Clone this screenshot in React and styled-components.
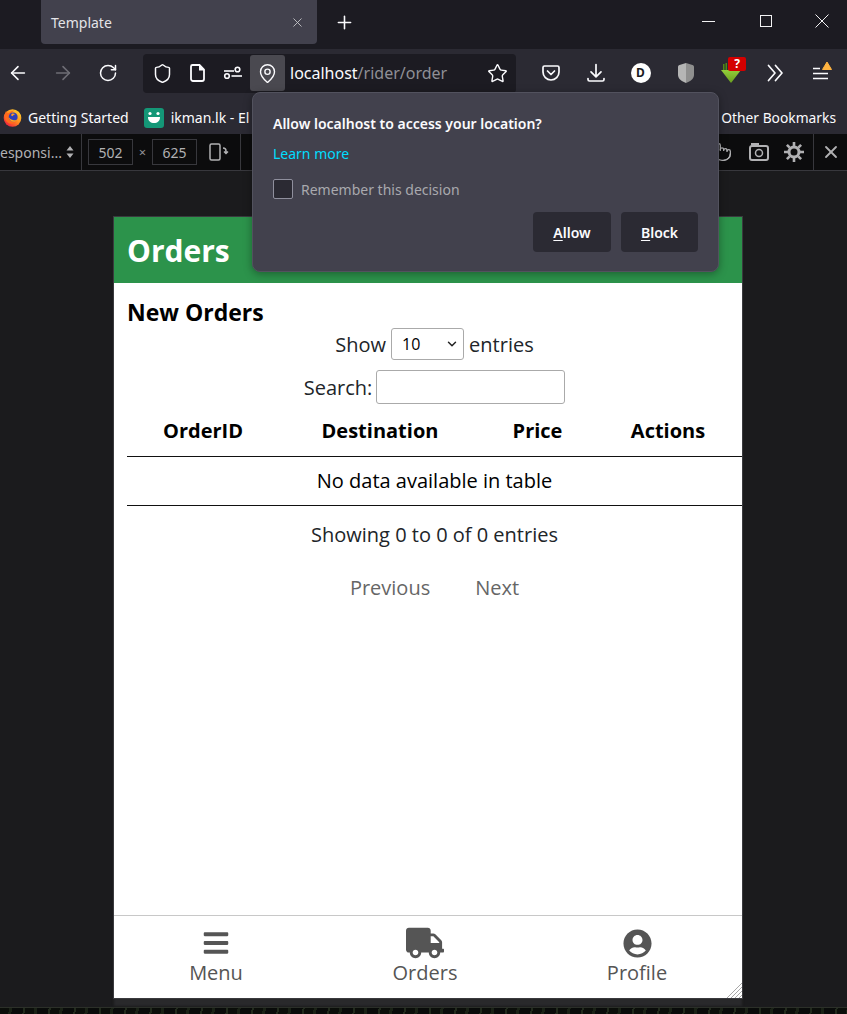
import React from "react";
import styled, { createGlobalStyle } from "styled-components";
import { FaBars, FaTruck, FaUserCircle } from "react-icons/fa";
import { ArrowLeft, ArrowRight, RotateCw, Shield, MapPin, Star, X, Plus, Pointer, ChevronDown } from "lucide-react";

const GlobalStyle = createGlobalStyle`
  html, body { margin: 0; padding: 0; background: #1b1b1d; }
  * { box-sizing: border-box; }
`;

const uiFont = `"Noto Sans", "Open Sans", sans-serif`;
const pageFont = `"Open Sans", "Noto Sans", sans-serif`;

const Browser = styled.div`
  position: relative;
  width: 847px;
  height: 1014px;
  overflow: hidden;
  display: flex;
  flex-direction: column;
  font-family: ${uiFont};
  background: #1b1b1d;
`;

const TabStrip = styled.div`
  height: 49px;
  background: #1c1b22;
  display: flex;
  align-items: flex-start;
  padding-left: 41px;
  flex: none;
`;

const Tab = styled.div`
  width: 276px;
  height: 44px;
  background: #42414d;
  border-radius: 0 0 4px 4px;
  display: flex;
  align-items: center;
  justify-content: space-between;
  padding: 0 12px 0 10px;
  color: #e4e4e8;
  font-size: 14px;
`;

const NewTab = styled.div`
  width: 54px;
  height: 44px;
  display: flex;
  align-items: center;
  justify-content: center;
  color: #fbfbfe;
`;

const WindowControls = styled.div`
  margin-left: auto;
  display: flex;
  align-items: center;
  height: 42px;
  color: #f2f2f4;
`;

const WindowButton = styled.div`
  width: ${(p) => p.$w}px;
  display: flex;
  justify-content: center;
`;

const Toolbar = styled.div`
  height: 52px;
  background: #2b2a33;
  display: flex;
  align-items: center;
  padding: 0 4px 4px 0;
  flex: none;
`;

const ToolIcon = styled.div`
  position: relative;
  width: 45px;
  height: 36px;
  flex: none;
  display: flex;
  align-items: center;
  justify-content: center;
  color: ${(p) => (p.$dim ? "#6f6e76" : "#fbfbfe")};
`;

const NavGroup = styled.div`
  display: flex;
  margin-left: -5px;
`;

const UrlBar = styled.div`
  width: 373px;
  height: 39px;
  margin: 0 12px 0 13px;
  background: #1c1b22;
  border-radius: 4px;
  display: flex;
  align-items: center;
  padding-left: 1px;
  color: #fbfbfe;
`;

const UrlIcon = styled.div`
  width: ${(p) => p.$w || 35}px;
  height: 36px;
  flex: none;
  display: flex;
  align-items: center;
  justify-content: center;
  border-radius: 3px;
  background: ${(p) => (p.$active ? "#4a4950" : "transparent")};
`;

const UrlText = styled.div`
  margin-left: 5px;
  font-size: 16px;
  flex: 1;
  color: #fbfbfe;
  white-space: nowrap;
  span { color: #8f8f96; }
`;

const Bookmarks = styled.div`
  height: 33px;
  background: #2b2a33;
  display: flex;
  align-items: center;
  padding: 0 11px 0 3px;
  color: #fbfbfe;
  font-size: 14px;
  flex: none;
`;

const Bookmark = styled.div`
  display: flex;
  align-items: center;
  gap: ${(p) => p.$gap || 6}px;
  margin-right: 15px;
  white-space: nowrap;
`;

const OtherBookmarks = styled.div`
  margin-left: auto;
  font-size: 13.8px;
  white-space: nowrap;
`;

const DevBar = styled.div`
  height: 37px;
  background: #0c0c0d;
  border-bottom: 1px solid #38383d;
  display: flex;
  align-items: center;
  color: #b1b1b3;
  font-size: 14px;
  flex: none;
`;

const DeviceName = styled.div`
  width: 82px;
  height: 100%;
  margin-right: 6px;
  display: flex;
  align-items: center;
  border-right: 1px solid #38383d;
  white-space: nowrap;
  overflow: hidden;
  svg { margin-left: 4px; flex: none; }
`;

const SizeInput = styled.div`
  width: 45px;
  height: 26px;
  padding-top: 1px;
  border: 1px solid #38383d;
  display: flex;
  align-items: center;
  justify-content: center;
  font-size: 14px;
  color: #b1b1b3;
`;

const Times = styled.span`
  width: 19px;
  text-align: center;
  font-size: 13px;
  color: #939395;
`;

const DevIcon = styled.div`
  width: ${(p) => p.$w || 35}px;
  height: 100%;
  display: flex;
  align-items: center;
  justify-content: center;
  flex: none;
  border-left: ${(p) => (p.$sep ? "1px solid #38383d" : "none")};
  border-right: ${(p) => (p.$sepRight ? "1px solid #38383d" : "none")};
  color: #b1b1b3;
`;

const DevRight = styled.div`
  margin-left: auto;
  height: 100%;
  display: flex;
  align-items: center;
`;

const Viewport = styled.div`
  flex: 1;
  padding: 46px 0 0 114px;
  background: #1b1b1d;
`;

const WallpaperStrip = styled.div`
  height: 7px;
  flex: none;
  border-top: 1px solid #2c3029;
  background: repeating-linear-gradient(100deg, #0b0e0a 0 9px, #1a2216 9px 12px, #090b0a 12px 23px, #222b1d 23px 25px);
`;

const Page = styled.div`
  position: relative;
  width: 628px;
  height: 781px;
  background: #fff;
  display: flex;
  flex-direction: column;
  box-shadow: 0 0 0 1px #3a3a3e, 0 8px 2px 0 #29292b;
  font-family: ${pageFont};
  color: #212529;
`;

const PageHeader = styled.header`
  height: 66px;
  background: #2c934b;
  color: #fff;
  display: flex;
  align-items: center;
  padding-left: 13px;
  flex: none;
  h1 { margin: 0; font-size: 30px; font-weight: 700; }
`;

const Content = styled.main`
  flex: 1;
  padding: 13px 0 0 13px;
  h2 { margin: 0; font-size: 23px; line-height: 32px; font-weight: 700; color: #000; }
`;

const FilterRow = styled.div`
  display: flex;
  justify-content: center;
  align-items: center;
  gap: ${(p) => p.$gap}px;
  font-size: 20px;
  height: ${(p) => p.$h}px;
  margin-top: ${(p) => p.$top || 0}px;
`;

const SelectWrap = styled.div`
  position: relative;
  width: 73px;
  height: 32px;
  svg { position: absolute; right: 5px; top: 9px; pointer-events: none; color: #222; }
`;

const LengthSelect = styled.select`
  appearance: none;
  width: 100%;
  height: 100%;
  font-family: ${pageFont};
  font-size: 16px;
  padding-left: 10px;
  background: #fff;
  border: 1px solid #aaa;
  border-radius: 3px;
  color: #000;
`;

const SearchInput = styled.input`
  width: 189px;
  height: 34px;
  border: 1px solid #aaa;
  border-radius: 3px;
  background: #fff;
`;

const OrdersTable = styled.table`
  width: 615px;
  table-layout: fixed;
  border-collapse: collapse;
  font-size: 20px;
  color: #000;
  margin-top: 1px;
  th {
    height: 51px;
    font-weight: 700;
    text-align: center;
    padding: 0;
    border-bottom: 1px solid #111;
  }
  td {
    height: 49px;
    text-align: center;
    padding: 0;
    border-bottom: 1px solid #111;
  }
`;

const TableInfo = styled.div`
  text-align: center;
  font-size: 20px;
  margin-top: 15px;
  line-height: 27px;
`;

const Pager = styled.div`
  display: flex;
  justify-content: center;
  gap: 45px;
  margin-top: 26px;
  font-size: 20px;
  line-height: 27px;
  color: #666;
`;

const BottomNav = styled.nav`
  height: 83px;
  border-top: 1px solid #c8c8c8;
  display: grid;
  grid-template-columns: 204px 214px 210px;
  flex: none;
`;

const NavItem = styled.div`
  display: flex;
  flex-direction: column;
  align-items: center;
  padding-top: 12px;
  color: #555;
  font-size: 20px;
  line-height: 27px;
  span { margin-top: 1px; }
`;

const NavIconBox = styled.div`
  height: 30px;
  display: flex;
  align-items: center;
  justify-content: center;
`;

const ResizeGrip = styled.svg`
  position: absolute;
  right: 0;
  bottom: 0;
`;

const Doorhanger = styled.div`
  position: absolute;
  left: 252px;
  top: 92px;
  width: 467px;
  height: 180px;
  background: #42414d;
  border: 1px solid #52525e;
  border-radius: 8px;
  padding: 21px 20px 0;
  color: #fbfbfe;
  font-size: 14px;
  box-shadow: 0 2px 8px rgba(0, 0, 0, 0.35);
`;

const DoorTitle = styled.div`
  font-weight: 600;
  line-height: 20px;
`;

const LearnMore = styled.div`
  margin-top: 10px;
  line-height: 20px;
  color: #00ddff;
`;

const RememberRow = styled.div`
  display: flex;
  align-items: center;
  gap: 8px;
  margin-top: 15px;
  color: #a9a9ae;
`;

const CheckBox = styled.div`
  width: 20px;
  height: 20px;
  background: #2b2a33;
  border: 1px solid #8f8f9d;
  border-radius: 2px;
`;

const DoorActions = styled.div`
  display: flex;
  justify-content: flex-end;
  gap: 10px;
  margin-top: 13px;
`;

const DoorButton = styled.div`
  width: ${(p) => p.$w}px;
  height: 40px;
  background: #2b2a33;
  border-radius: 4px;
  display: flex;
  align-items: center;
  justify-content: center;
  font-weight: 600;
  u { text-decoration-thickness: 1px; text-underline-offset: 2px; }
`;

const Badge = styled.div`
  position: absolute;
  right: 7px;
  top: 2px;
  width: 18px;
  height: 14px;
  background: #d40000;
  border-radius: 2px;
  color: #fff;
  font-size: 12px;
  font-weight: 700;
  line-height: 14px;
  text-align: center;
`;

const DBadge = styled.div`
  width: 20px;
  height: 20px;
  border-radius: 50%;
  background: #fff;
  color: #1c1b22;
  font-size: 12px;
  font-weight: 700;
  line-height: 20px;
  text-align: center;
`;

const FirefoxLogo = () => (
  <svg width="19" height="19" viewBox="0 0 20 20">
    <defs>
      <linearGradient id="fx" x1="0.9" y1="0.1" x2="0.2" y2="0.95">
        <stop offset="0" stopColor="#ffd22e" />
        <stop offset="0.5" stopColor="#ff8a1f" />
        <stop offset="1" stopColor="#f0203f" />
      </linearGradient>
    </defs>
    <circle cx="10" cy="10.5" r="9.3" fill="url(#fx)" />
    <path d="M3 3.500c1 1.500 1.500 1.800 3 2 2-2 4-3 6-3C9.500 4 9 5 9 6c3-.5 6 1.500 6 5 0 3.500-3 5.500-6 5.500-4 0-7-3-7-7 0-2 .3-4 1-6z" fill="#ff6a1c" />
    <circle cx="10.700" cy="9.500" r="4.700" fill="#2f3fb8" />
    <path d="M6 9.500c.3 3 2.500 5 5 5 2.300 0 4-1.400 4.600-3.300-1 1.200-2.600 1.800-4.300 1.600C9 12.500 7 11.500 6 9.500z" fill="#ffa41f" />
    <path d="M9 6c1-.3 3-.3 4 .5-1.500.2-2.500 1-2.800 2.300L8.500 8z" fill="#ff9a1f" />
  </svg>
);

const IkmanLogo = () => (
  <svg width="20" height="20" viewBox="0 0 20 20">
    <rect width="20" height="20" rx="3" fill="#149777" />
    <circle cx="6" cy="5.500" r="1.600" fill="#fff" />
    <circle cx="14" cy="5.500" r="1.600" fill="#fff" />
    <path d="M4 9h12c0 4-2.600 6-6 6s-6-2-6-6z" fill="#fff" />
  </svg>
);

const PageIcon = () => (
  <svg width="18" height="20" viewBox="0 0 18 20" fill="none" stroke="#fbfbfe" strokeWidth="1.800">
    <path d="M3.500 2h7l4.500 4.500V16a2 2 0 0 1-2 2H4a2 2 0 0 1-2-2V3.500A1.500 1.500 0 0 1 3.500 2z" />
    <path d="M10 2l5.500 5.500H10z" fill="#fbfbfe" stroke="none" />
  </svg>
);

const PermissionsIcon = () => (
  <svg width="20" height="16" viewBox="0 0 20 16" fill="none" stroke="#fbfbfe" strokeWidth="1.600">
    <path d="M1 6h10" />
    <circle cx="14.500" cy="4.500" r="2.300" />
    <circle cx="4" cy="11" r="2.300" />
    <path d="M8.500 11H19" />
  </svg>
);

const PocketIcon = () => (
  <svg width="20" height="20" viewBox="0 0 20 20" fill="none" stroke="#fbfbfe" strokeWidth="1.700">
    <path d="M3.500 3h13A1.500 1.500 0 0 1 18 4.500V9a8 8 0 0 1-16 0V4.500A1.500 1.500 0 0 1 3.500 3z" />
    <path d="M6.500 8l3.500 3.500L13.500 8" strokeLinecap="round" strokeLinejoin="round" />
  </svg>
);

const TrayDownload = () => (
  <svg width="20" height="20" viewBox="0 0 20 20" fill="none" stroke="#fbfbfe" strokeWidth="1.700" strokeLinecap="round" strokeLinejoin="round">
    <path d="M10 1.500v12M5 8.800l5 5 5-5" />
    <path d="M2 15.500v1a1.500 1.500 0 0 0 1.500 1.500h13a1.500 1.500 0 0 0 1.500-1.500v-1" />
  </svg>
);

const GreyShield = () => (
  <svg width="16" height="20" viewBox="0 0 16 20">
    <path d="M8 0L1.500 2C.6 2.300 0 3 0 4v8c0 3.500 3.500 6.500 8 8z" fill="#b5b5b5" />
    <path d="M8 0l6.500 2c.9.3 1.500 1 1.500 2v8c0 3.500-3.500 6.500-8 8z" fill="#8f8f8f" />
  </svg>
);

const GreenArrow = () => (
  <svg width="22" height="20" viewBox="0 0 22 20">
    <defs>
      <linearGradient id="ga" x1="0" y1="0" x2="0" y2="1">
        <stop offset="0" stopColor="#93cf3a" />
        <stop offset="1" stopColor="#6a9f20" />
      </linearGradient>
    </defs>
    <path d="M3 1h1.500v6H3zM5.500 0H7v7H5.500zM8 0h1.500v7H8z" fill="#4f8a14" />
    <path d="M1 7h20L11 20z" fill="url(#ga)" />
  </svg>
);

const DoubleChevron = () => (
  <svg width="17" height="18" viewBox="0 0 17 18" fill="none" stroke="#fbfbfe" strokeWidth="1.700" strokeLinecap="round" strokeLinejoin="round">
    <path d="M1.500 1.500L8 9l-6.500 7.500M8.500 1.500L15 9l-6.500 7.500" />
  </svg>
);

const MenuAlert = () => (
  <svg width="24" height="24" viewBox="0 0 24 24">
    <path d="M4 7.500h7M4 12.500h15M4 17.500h15" stroke="#fbfbfe" strokeWidth="1.700" />
    <path d="M18 1l4.500 7.500h-9z" fill="#ffb340" stroke="#ffb340" strokeWidth="1" strokeLinejoin="round" />
  </svg>
);

const RotateIcon = () => (
  <svg width="20" height="18" viewBox="0 0 20 18" fill="none" stroke="#b1b1b3" strokeWidth="1.500">
    <rect x="1" y="1" width="10" height="16" rx="1.500" />
    <path d="M14 5c2 0 3 1 3 3v2M15 8.500l2 2 2-2" />
  </svg>
);

const UpDownArrows = () => (
  <svg width="8" height="12" viewBox="0 0 8 12" fill="#b1b1b3">
    <path d="M4 0l3.500 4.500h-7zM4 12L.5 7.500h7z" />
  </svg>
);

const CameraIcon = () => (
  <svg width="22" height="20" viewBox="0 0 22 20" fill="none" stroke="#b1b1b3" strokeWidth="2">
    <rect x="2" y="4" width="18" height="14" rx="2" />
    <circle cx="11" cy="11" r="3.500" strokeWidth="1.500" />
    <path d="M4 3.500V2h6v1.500" />
  </svg>
);

const GearIcon = () => (
  <svg width="22" height="22" viewBox="0 0 22 22" fill="none" stroke="#b1b1b3">
    <circle cx="11" cy="11" r="5" strokeWidth="3" />
    <path d="M11 1v4M11 17v4M1 11h4M17 11h4M3.900 3.900l2.800 2.800M15.300 15.300l2.800 2.800M3.900 18.100l2.800-2.800M15.300 6.700l2.800-2.800" strokeWidth="2.600" />
  </svg>
);

const MinimizeGlyph = () => (
  <svg width="13" height="3" viewBox="0 0 13 3" stroke="currentColor" strokeWidth="1">
    <path d="M0 1.500h13" />
  </svg>
);

const MaximizeGlyph = () => (
  <svg width="12" height="12" viewBox="0 0 12 12" fill="none" stroke="currentColor" strokeWidth="1">
    <rect x="0.500" y="0.500" width="11" height="11" />
  </svg>
);

const CloseGlyph = () => (
  <svg width="14" height="14" viewBox="0 0 14 14" stroke="currentColor" strokeWidth="1">
    <path d="M.5.500l13 13M13.500.500l-13 13" />
  </svg>
);

const Grip = () => (
  <ResizeGrip width="16" height="16" viewBox="0 0 16 16" stroke="#a8a8a8" strokeWidth="1">
    <path d="M16 1L1 16M16 5L5 16M16 9l-7 7M16 13l-3 3" />
  </ResizeGrip>
);

export default function App() {
  return (
    <Browser>
      <GlobalStyle />
      <TabStrip>
        <Tab>
          Template
          <X size={15} strokeWidth={1.4} color="#c8c8cc" />
        </Tab>
        <NewTab>
          <Plus size={21} strokeWidth={1.8} />
        </NewTab>
        <WindowControls>
          <WindowButton $w={54}><MinimizeGlyph /></WindowButton>
          <WindowButton $w={62}><MaximizeGlyph /></WindowButton>
          <WindowButton $w={50}><CloseGlyph /></WindowButton>
        </WindowControls>
      </TabStrip>

      <Toolbar>
        <NavGroup>
          <ToolIcon><ArrowLeft size={22} strokeWidth={1.7} /></ToolIcon>
          <ToolIcon $dim><ArrowRight size={22} strokeWidth={1.7} /></ToolIcon>
          <ToolIcon><RotateCw size={20} strokeWidth={1.8} /></ToolIcon>
        </NavGroup>
        <UrlBar>
          <UrlIcon $w={36}><Shield size={21} strokeWidth={1.7} /></UrlIcon>
          <UrlIcon><PageIcon /></UrlIcon>
          <UrlIcon><PermissionsIcon /></UrlIcon>
          <UrlIcon $active><MapPin size={21} strokeWidth={1.6} /></UrlIcon>
          <UrlText>localhost<span>/rider/order</span></UrlText>
          <UrlIcon $w={38}><Star size={21} strokeWidth={1.6} /></UrlIcon>
        </UrlBar>
        <ToolIcon><PocketIcon /></ToolIcon>
        <ToolIcon><TrayDownload /></ToolIcon>
        <ToolIcon><DBadge>D</DBadge></ToolIcon>
        <ToolIcon><GreyShield /></ToolIcon>
        <ToolIcon>
          <GreenArrow />
          <Badge>?</Badge>
        </ToolIcon>
        <ToolIcon><DoubleChevron /></ToolIcon>
        <ToolIcon><MenuAlert /></ToolIcon>
      </Toolbar>

      <Bookmarks>
        <Bookmark><FirefoxLogo />Getting Started</Bookmark>
        <Bookmark $gap={7}><IkmanLogo />ikman.lk - El</Bookmark>
        <OtherBookmarks>Other Bookmarks</OtherBookmarks>
      </Bookmarks>

      <DevBar>
        <DeviceName>esponsi...<UpDownArrows /></DeviceName>
        <SizeInput>502</SizeInput>
        <Times>×</Times>
        <SizeInput>625</SizeInput>
        <DevIcon $w={44} $sepRight><RotateIcon /></DevIcon>
        <DevRight>
          <DevIcon $w={42}><Pointer size={20} strokeWidth={1.5} /></DevIcon>
          <DevIcon $w={32}><CameraIcon /></DevIcon>
          <DevIcon $w={38}><GearIcon /></DevIcon>
          <DevIcon $w={34} $sep><X size={20} strokeWidth={2.2} /></DevIcon>
        </DevRight>
      </DevBar>

      <Viewport>
        <Page>
          <PageHeader><h1>Orders</h1></PageHeader>
          <Content>
            <h2>New Orders</h2>
            <FilterRow $h={32} $gap={5}>
              Show
              <SelectWrap>
                <LengthSelect defaultValue="10">
                  <option>10</option>
                  <option>25</option>
                  <option>50</option>
                </LengthSelect>
                <ChevronDown size={14} strokeWidth={2.5} />
              </SelectWrap>
              entries
            </FilterRow>
            <FilterRow $h={34} $top={10} $gap={4}>
              Search:
              <SearchInput />
            </FilterRow>
            <OrdersTable>
              <colgroup>
                <col width="152" />
                <col width="202" />
                <col width="113" />
                <col width="148" />
              </colgroup>
              <thead>
                <tr>
                  <th>OrderID</th>
                  <th>Destination</th>
                  <th>Price</th>
                  <th>Actions</th>
                </tr>
              </thead>
              <tbody>
                <tr><td colSpan={4}>No data available in table</td></tr>
              </tbody>
            </OrdersTable>
            <TableInfo>Showing 0 to 0 of 0 entries</TableInfo>
            <Pager>
              <span>Previous</span>
              <span>Next</span>
            </Pager>
          </Content>
          <BottomNav>
            <NavItem><NavIconBox><FaBars size={28} /></NavIconBox><span>Menu</span></NavItem>
            <NavItem><NavIconBox><FaTruck size={38} /></NavIconBox><span>Orders</span></NavItem>
            <NavItem><NavIconBox><FaUserCircle size={29} /></NavIconBox><span>Profile</span></NavItem>
          </BottomNav>
          <Grip />
        </Page>
      </Viewport>
      <WallpaperStrip />

      <Doorhanger>
        <DoorTitle>Allow localhost to access your location?</DoorTitle>
        <LearnMore>Learn more</LearnMore>
        <RememberRow>
          <CheckBox />
          Remember this decision
        </RememberRow>
        <DoorActions>
          <DoorButton $w={78}><span><u>A</u>llow</span></DoorButton>
          <DoorButton $w={77}><span><u>B</u>lock</span></DoorButton>
        </DoorActions>
      </Doorhanger>
    </Browser>
  );
}
